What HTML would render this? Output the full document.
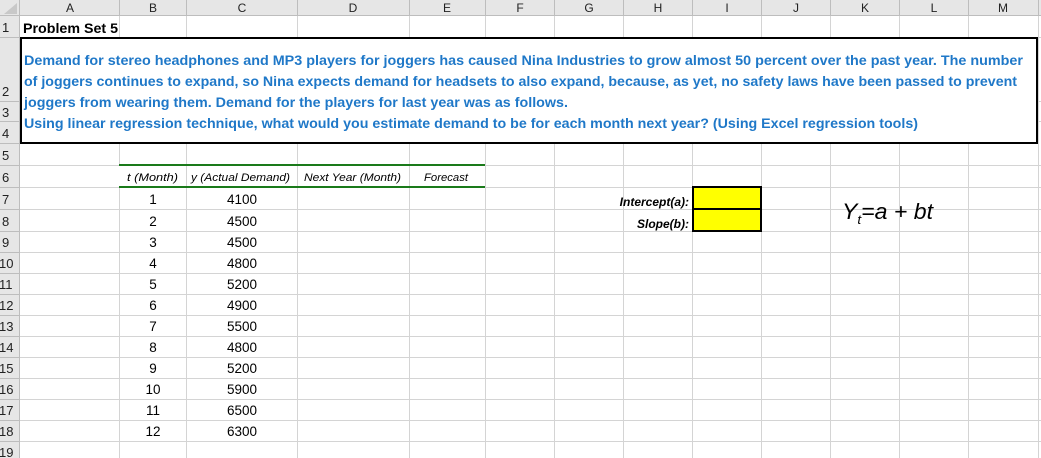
<!DOCTYPE html>
<html><head><meta charset="utf-8"><style>
html,body{margin:0;padding:0;background:#fff;}
svg{display:block;}
</style></head><body>
<svg width="1041" height="458" xmlns="http://www.w3.org/2000/svg" font-family="Liberation Sans, sans-serif">
<rect width="1041" height="458" fill="#fff"/>
<g stroke="#d4d4d4" stroke-width="1">
<line x1="119.5" y1="16" x2="119.5" y2="458"/>
<line x1="186.5" y1="16" x2="186.5" y2="458"/>
<line x1="297.5" y1="16" x2="297.5" y2="458"/>
<line x1="409.5" y1="16" x2="409.5" y2="458"/>
<line x1="485.5" y1="16" x2="485.5" y2="458"/>
<line x1="554.5" y1="16" x2="554.5" y2="458"/>
<line x1="623.5" y1="16" x2="623.5" y2="458"/>
<line x1="692.5" y1="16" x2="692.5" y2="458"/>
<line x1="761.5" y1="16" x2="761.5" y2="458"/>
<line x1="830.5" y1="16" x2="830.5" y2="458"/>
<line x1="899.5" y1="16" x2="899.5" y2="458"/>
<line x1="968.5" y1="16" x2="968.5" y2="458"/>
<line x1="1038.5" y1="16" x2="1038.5" y2="458"/>
<line x1="20" y1="37.5" x2="1041" y2="37.5"/>
<line x1="20" y1="101.5" x2="1041" y2="101.5"/>
<line x1="20" y1="121.5" x2="1041" y2="121.5"/>
<line x1="20" y1="165.5" x2="1041" y2="165.5"/>
<line x1="20" y1="187.5" x2="1041" y2="187.5"/>
<line x1="20" y1="209.5" x2="1041" y2="209.5"/>
<line x1="20" y1="231.5" x2="1041" y2="231.5"/>
<line x1="20" y1="252.5" x2="1041" y2="252.5"/>
<line x1="20" y1="273.5" x2="1041" y2="273.5"/>
<line x1="20" y1="294.5" x2="1041" y2="294.5"/>
<line x1="20" y1="315.5" x2="1041" y2="315.5"/>
<line x1="20" y1="336.5" x2="1041" y2="336.5"/>
<line x1="20" y1="357.5" x2="1041" y2="357.5"/>
<line x1="20" y1="378.5" x2="1041" y2="378.5"/>
<line x1="20" y1="399.5" x2="1041" y2="399.5"/>
<line x1="20" y1="420.5" x2="1041" y2="420.5"/>
<line x1="20" y1="441.5" x2="1041" y2="441.5"/>
</g>
<rect x="20" y="38" width="1017" height="105" fill="#fff"/>
<rect x="0" y="0" width="1041" height="16" fill="#e6e6e6"/>
<rect x="0" y="0" width="20" height="458" fill="#e6e6e6"/>
<g stroke="#bdbdbd" stroke-width="1">
<line x1="0" y1="15.5" x2="1041" y2="15.5"/>
<line x1="19.5" y1="0" x2="19.5" y2="458"/>
<line x1="119.5" y1="0" x2="119.5" y2="16"/><line x1="186.5" y1="0" x2="186.5" y2="16"/>
<line x1="297.5" y1="0" x2="297.5" y2="16"/><line x1="409.5" y1="0" x2="409.5" y2="16"/>
<line x1="485.5" y1="0" x2="485.5" y2="16"/><line x1="554.5" y1="0" x2="554.5" y2="16"/>
<line x1="623.5" y1="0" x2="623.5" y2="16"/><line x1="692.5" y1="0" x2="692.5" y2="16"/>
<line x1="761.5" y1="0" x2="761.5" y2="16"/><line x1="830.5" y1="0" x2="830.5" y2="16"/>
<line x1="899.5" y1="0" x2="899.5" y2="16"/><line x1="968.5" y1="0" x2="968.5" y2="16"/>
<line x1="1038.5" y1="0" x2="1038.5" y2="16"/>
<line x1="0" y1="37.5" x2="20" y2="37.5"/><line x1="0" y1="101.5" x2="20" y2="101.5"/>
<line x1="0" y1="121.5" x2="20" y2="121.5"/><line x1="0" y1="143.5" x2="20" y2="143.5"/>
<line x1="0" y1="165.5" x2="20" y2="165.5"/><line x1="0" y1="187.5" x2="20" y2="187.5"/>
<line x1="0" y1="209.5" x2="20" y2="209.5"/><line x1="0" y1="231.5" x2="20" y2="231.5"/>
<line x1="0" y1="252.5" x2="20" y2="252.5"/><line x1="0" y1="273.5" x2="20" y2="273.5"/>
<line x1="0" y1="294.5" x2="20" y2="294.5"/><line x1="0" y1="315.5" x2="20" y2="315.5"/>
<line x1="0" y1="336.5" x2="20" y2="336.5"/><line x1="0" y1="357.5" x2="20" y2="357.5"/>
<line x1="0" y1="378.5" x2="20" y2="378.5"/><line x1="0" y1="399.5" x2="20" y2="399.5"/>
<line x1="0" y1="420.5" x2="20" y2="420.5"/><line x1="0" y1="441.5" x2="20" y2="441.5"/>
</g>
<polygon points="4,14 17,14 17,3" fill="#c8c8c8"/>
<g font-size="12" fill="#222" text-anchor="middle">
<text x="70" y="12">A</text><text x="153" y="12">B</text><text x="242" y="12">C</text>
<text x="353" y="12">D</text><text x="447" y="12">E</text><text x="520" y="12">F</text>
<text x="589" y="12">G</text><text x="658" y="12">H</text><text x="727" y="12">I</text>
<text x="796" y="12">J</text><text x="865" y="12">K</text><text x="934" y="12">L</text>
<text x="1003" y="12">M</text>
</g>
<g font-size="13" fill="#222">
<text x="2" y="32">1</text><text x="2" y="96">2</text><text x="2" y="117">3</text>
<text x="2" y="138">4</text><text x="2" y="160">5</text><text x="2" y="182">6</text>
<text x="2" y="204">7</text><text x="2" y="226">8</text><text x="2" y="247">9</text>
<text x="-1" y="268">10</text><text x="-1" y="289">11</text><text x="-1" y="310">12</text>
<text x="-1" y="331">13</text><text x="-1" y="352">14</text><text x="-1" y="373">15</text>
<text x="-1" y="394">16</text><text x="-1" y="415">17</text><text x="-1" y="436">18</text>
<text x="-1" y="457">19</text>
</g>
<text x="23" y="33" font-size="14" font-weight="bold" fill="#000" textLength="95" lengthAdjust="spacingAndGlyphs">Problem Set 5</text>
<rect x="21" y="38" width="1016" height="105" fill="none" stroke="#000" stroke-width="2"/>
<g font-size="13.5" font-weight="bold" fill="#1f78c8">
<text x="24" y="65" textLength="999" lengthAdjust="spacingAndGlyphs">Demand for stereo headphones and MP3 players for joggers has caused Nina Industries to grow almost 50 percent over the past year. The number</text>
<text x="24" y="86" textLength="993" lengthAdjust="spacingAndGlyphs">of joggers continues to expand, so Nina expects demand for headsets to also expand, because, as yet, no safety laws have been passed to prevent</text>
<text x="24" y="107" textLength="544" lengthAdjust="spacingAndGlyphs">joggers from wearing them. Demand for the players for last year was as follows.</text>
<text x="24" y="128" textLength="894" lengthAdjust="spacingAndGlyphs">Using linear regression technique, what would you estimate demand to be for each month next year? (Using Excel regression tools)</text>
</g>
<rect x="119" y="164" width="366" height="23" fill="#fff"/>
<line x1="119" y1="165" x2="485" y2="165" stroke="#1a7a1a" stroke-width="2"/>
<line x1="119" y1="187" x2="485" y2="187" stroke="#1a7a1a" stroke-width="2"/>
<line x1="186.5" y1="166" x2="186.5" y2="186" stroke="#d4d4d4"/>
<line x1="297.5" y1="166" x2="297.5" y2="186" stroke="#d4d4d4"/>
<line x1="409.5" y1="166" x2="409.5" y2="186" stroke="#d4d4d4"/>
<g font-size="11" font-style="italic" fill="#000">
<text x="127" y="181" textLength="51" lengthAdjust="spacingAndGlyphs">t (Month)</text>
<text x="191" y="181" textLength="99" lengthAdjust="spacingAndGlyphs">y (Actual Demand)</text>
<text x="304" y="181" textLength="97" lengthAdjust="spacingAndGlyphs">Next Year (Month)</text>
<text x="424" y="181" textLength="44" lengthAdjust="spacingAndGlyphs">Forecast</text>
</g>
<g font-size="13.5" fill="#000" text-anchor="middle">
<text x="153" y="204">1</text><text x="242" y="204">4100</text>
<text x="153" y="226">2</text><text x="242" y="226">4500</text>
<text x="153" y="247">3</text><text x="242" y="247">4500</text>
<text x="153" y="268">4</text><text x="242" y="268">4800</text>
<text x="153" y="289">5</text><text x="242" y="289">5200</text>
<text x="153" y="310">6</text><text x="242" y="310">4900</text>
<text x="153" y="331">7</text><text x="242" y="331">5500</text>
<text x="153" y="352">8</text><text x="242" y="352">4800</text>
<text x="153" y="373">9</text><text x="242" y="373">5200</text>
<text x="153" y="394">10</text><text x="242" y="394">5900</text>
<text x="153" y="415">11</text><text x="242" y="415">6500</text>
<text x="153" y="436">12</text><text x="242" y="436">6300</text>
</g>
<rect x="693" y="187" width="68" height="44" fill="#ffff00" stroke="#000" stroke-width="2"/>
<line x1="693" y1="209" x2="761" y2="209" stroke="#000" stroke-width="2"/>
<g font-size="12" font-weight="bold" font-style="italic" fill="#000" text-anchor="end">
<text x="689" y="206">Intercept(a):</text>
<text x="689" y="228">Slope(b):</text>
</g>
<text x="842" y="219" font-size="22" font-style="italic" fill="#000" textLength="91" lengthAdjust="spacingAndGlyphs">Y<tspan font-size="13" dy="5">t</tspan><tspan dy="-5">=a + bt</tspan></text>
</svg>
</body></html>
